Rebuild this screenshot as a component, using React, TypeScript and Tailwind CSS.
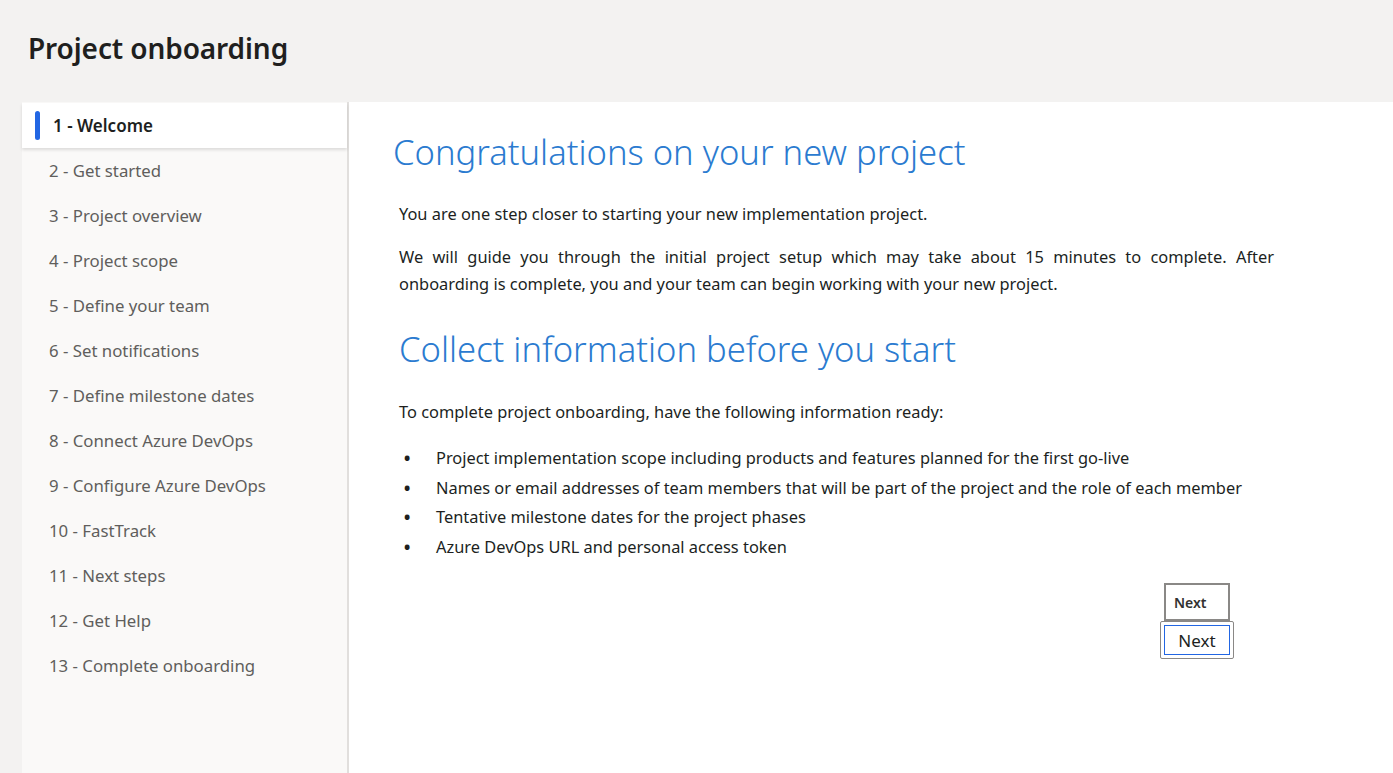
import React from 'react';

const steps = [
  '1 - Welcome',
  '2 - Get started',
  '3 - Project overview',
  '4 - Project scope',
  '5 - Define your team',
  '6 - Set notifications',
  '7 - Define milestone dates',
  '8 - Connect Azure DevOps',
  '9 - Configure Azure DevOps',
  '10 - FastTrack',
  '11 - Next steps',
  '12 - Get Help',
  '13 - Complete onboarding',
];

const checklist = [
  'Project implementation scope including products and features planned for the first go-live',
  'Names or email addresses of team members that will be part of the project and the role of each member',
  'Tentative milestone dates for the project phases',
  'Azure DevOps URL and personal access token',
];

export default function App() {
  const active = 0;

  return (
    <div className="min-h-screen bg-[#f3f2f1] flex flex-col font-['Noto_Sans',sans-serif] text-[#201f1e]">
      {/* En-tête */}
      <header className="h-[102px] flex items-center pl-[28px] pb-[6px]">
        <h1 className="text-[28px] font-semibold tracking-[-0.1px]">Project onboarding</h1>
      </header>

      <div className="flex flex-1 min-h-[671px]">
        {/* Étapes */}
        <nav className="ml-[22px] w-[327px] bg-[#faf9f8] border-r-2 border-[#e1dfdd] pt-px">
          {steps.map((label, i) =>
            i === active ? (
              <div
                key={i}
                className="h-[45px] bg-white flex items-center shadow-[0_2px_3px_rgba(0,0,0,0.12)] relative"
              >
                <span className="ml-[13px] w-[5px] h-[29px] rounded-full bg-[#2266e3]" />
                <span className="ml-[13px] text-[17px] font-semibold text-[#201f1e]">{label}</span>
              </div>
            ) : (
              <div key={i} className="h-[45px] flex items-center pl-[27px] text-[16.8px] text-[#605e5c]">
                {label}
              </div>
            )
          )}
        </nav>

        {/* Contenu */}
        <main className="flex-1 bg-white pl-[44px] pt-[24px]">
          <h2 className="text-[34.6px] font-light text-[#2b7bd0] leading-[52px]">
            Congratulations on your new project
          </h2>
          <div className="pl-[6px] w-[881px] text-[16.4px] leading-[27px]">
            <p className="mt-[22px]">You are one step closer to starting your new implementation project.</p>
            <p className="mt-[16px] text-justify">
              We will guide you through the initial project setup which may take about 15 minutes to complete. After
              onboarding is complete, you and your team can begin working with your new project.
            </p>
            <h2 className="mt-[26px] text-[34.6px] font-light text-[#2b7bd0] leading-[52px]">
              Collect information before you start
            </h2>
            <p className="mt-[23px]">To complete project onboarding, have the following information ready:</p>
            <ul className="mt-[18px]">
              {checklist.map((item, i) => (
                <li key={i} className="flex leading-[29.6px]">
                  <span className="w-[37px] pl-[4px] text-[22px] leading-[29.6px]">•</span>
                  <span>{item}</span>
                </li>
              ))}
            </ul>
          </div>

          <div className="w-[841px] flex flex-col items-end mt-[22px]">
            <button className="w-[66px] h-[38px] border-2 border-[#8a8886] text-left pl-[8px] text-[14px] font-semibold text-[#323130] mr-[4px]">
              Next
            </button>
            <div className="p-[3px] border border-[#8a8886] rounded-[2px]">
              <button className="w-[66px] h-[30px] border border-[#2266e3] text-[17px] text-[#201f1e]">Next</button>
            </div>
          </div>
        </main>
      </div>
    </div>
  );
}
